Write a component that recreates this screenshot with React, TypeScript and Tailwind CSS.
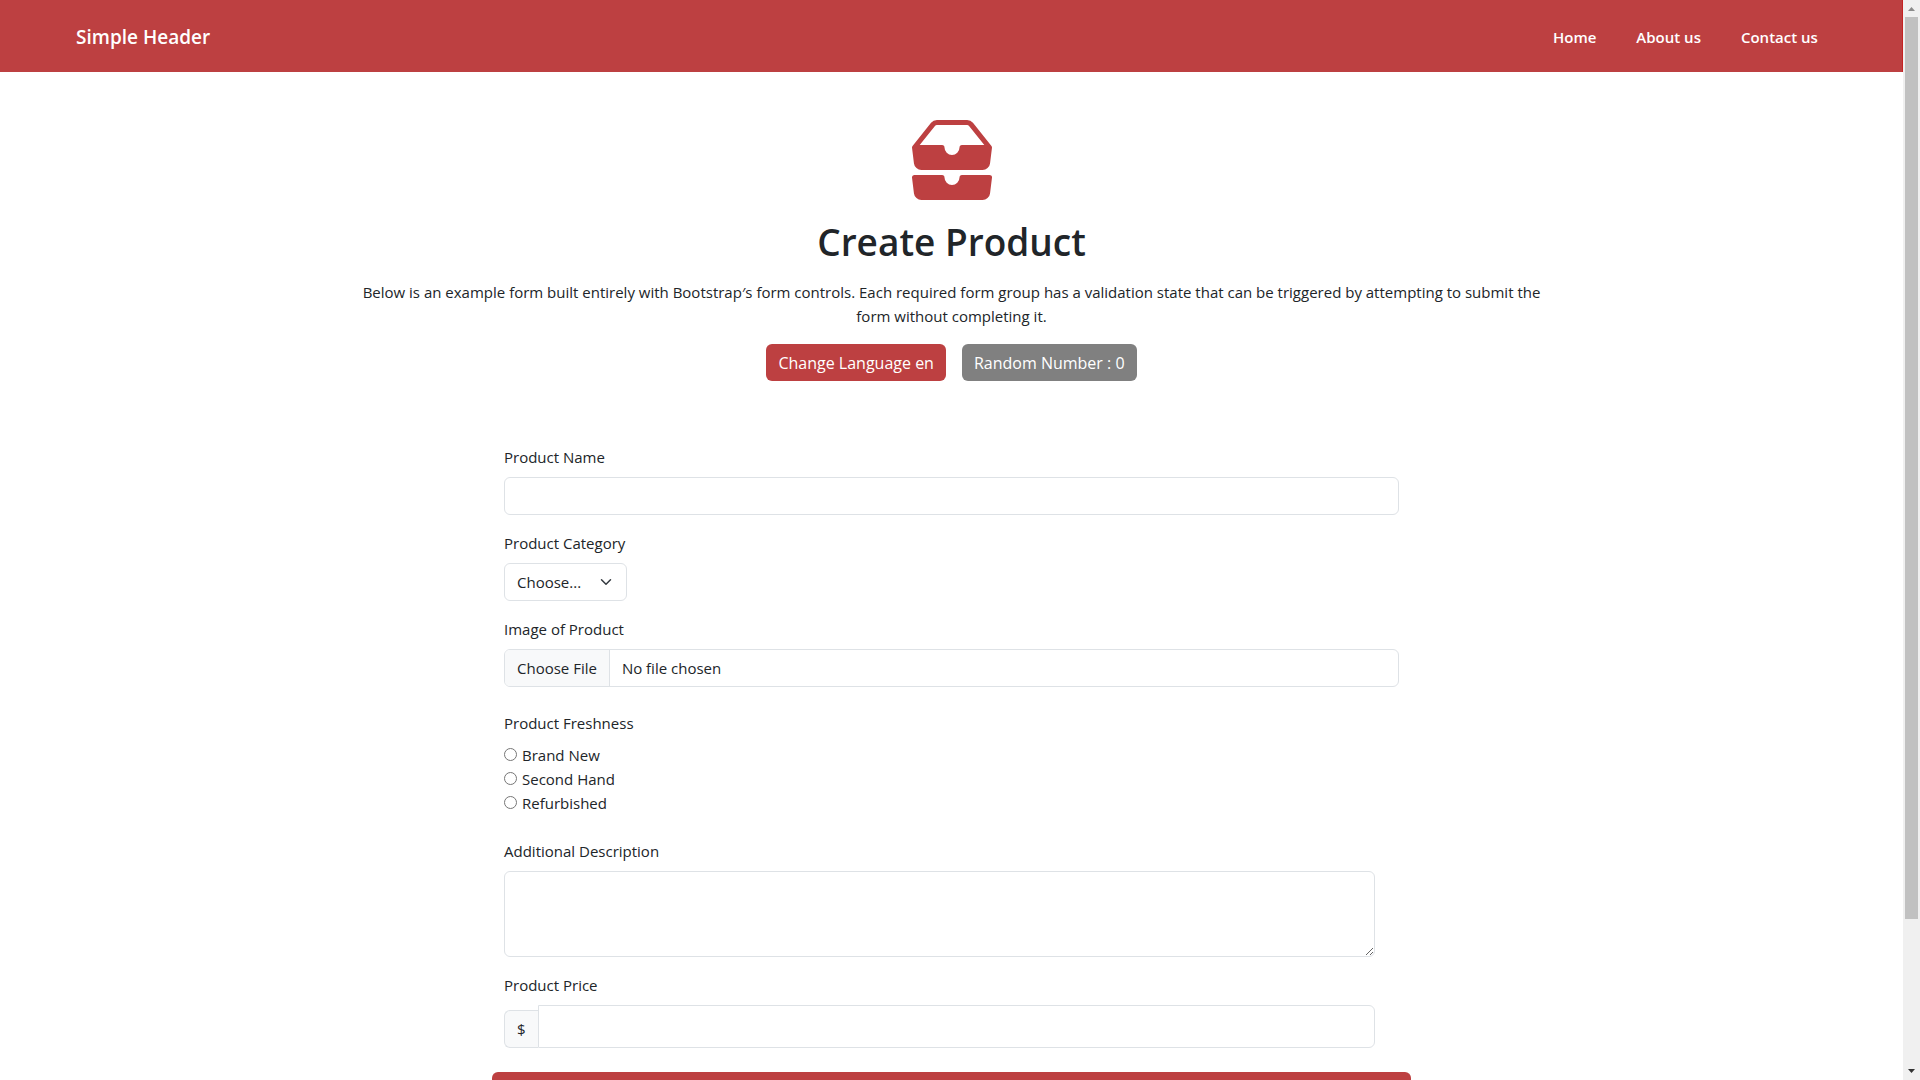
import { BsChevronDown, BsInboxesFill } from "react-icons/bs";

const links = ["Home", "About us", "Contact us"];
const freshness = ["Brand New", "Second Hand", "Refurbished"];

const labelClass = "mb-2 block";
const fieldClass =
  "rounded-md border border-[#dee2e6] bg-white text-[#212529] outline-none focus:border-[#bd4041]";

function Header() {
  return (
    <header className="flex h-18 items-center justify-between border-r border-[#c42323] bg-[#bd4041] px-[4%] pt-0.5 text-white">
      <a href="#" className="text-[19px] font-semibold">
        Simple Header
      </a>
      <nav className="flex gap-10 pr-2 text-[15px] font-semibold">
        {links.map((link) => (
          <a key={link} href="#">
            {link}
          </a>
        ))}
      </nav>
    </header>
  );
}

function Hero() {
  return (
    <section className="mx-auto flex max-w-[1200px] flex-col items-center pt-12 text-center">
      <BsInboxesFill className="size-20 text-[#bd4041]" />
      <h1 className="mt-[18px] mb-3.5 text-[37px] leading-12 font-semibold">Create Product</h1>
      <p>
        Below is an example form built entirely with Bootstrap′s form controls. Each required form
        group has a validation state that can be triggered by attempting to submit the form without
        completing it.
      </p>
      <div className="mt-4 flex gap-4 text-base text-white">
        <button type="button" className="h-[37px] rounded-md bg-[#bd4041] px-3">
          Change Language en
        </button>
        <button type="button" className="h-[37px] rounded-md bg-[#808080] px-3">
          Random Number : 0
        </button>
      </div>
    </section>
  );
}

function ProductForm() {
  return (
    <form className="mx-auto mt-16 max-w-[919px] pb-12">
      <div className="px-3">
        <label htmlFor="name" className={labelClass}>
          Product Name
        </label>
        <input id="name" type="text" className={`${fieldClass} block h-[38px] w-full px-3`} />

        <label htmlFor="category" className={`${labelClass} mt-4`}>
          Product Category
        </label>
        <div className="relative w-[123px]">
          <select
            id="category"
            className={`${fieldClass} block h-[38px] w-full appearance-none pr-9 pl-3`}
          >
            <option>Choose...</option>
            <option>Electronics</option>
            <option>Clothing</option>
          </select>
          <svg
            viewBox="0 0 16 16"
            className="pointer-events-none absolute top-[13px] right-[15px] size-3 fill-none stroke-[#343a40] stroke-2"
          >
            <path strokeLinecap="round" strokeLinejoin="round" d="m2 5 6 6 6-6" />
          </svg>
        </div>

        <label htmlFor="image" className={`${labelClass} mt-4`}>
          Image of Product
        </label>
        <input
          id="image"
          type="file"
          className={`${fieldClass} block h-[38px] w-full overflow-hidden file:mr-3 file:h-9 file:border-0 file:border-r file:border-solid file:border-[#dee2e6] file:bg-[#f8f9fa] file:px-3 file:text-[#212529]`}
        />

        <fieldset className="mt-6">
          <legend className="mb-2">Product Freshness</legend>
          {freshness.map((item) => (
            <label key={item} className="flex items-center gap-[5px]">
              <input type="radio" name="freshness" className="mb-px size-[13px]" />
              {item}
            </label>
          ))}
        </fieldset>

        <label htmlFor="description" className={`${labelClass} mt-6`}>
          Additional Description
        </label>
        <div className="pr-6">
          <textarea
            id="description"
            className={`${fieldClass} block h-[86px] w-full resize px-3 py-1.5`}
          />
        </div>

        <label htmlFor="price" className={`${labelClass} mt-4`}>
          Product Price
        </label>
        <div className="flex items-end pr-6">
          <span className="flex h-[38px] items-center rounded-l-md border border-r-0 border-[#dee2e6] bg-[#f8f9fa] px-3">
            $
          </span>
          <input
            id="price"
            type="text"
            className={`${fieldClass} h-[43px] min-w-0 flex-1 rounded-l-none px-3`}
          />
        </div>
      </div>
      <button type="submit" className="mt-6 w-full rounded-md bg-[#bd4041] py-2 text-white">
        Submit
      </button>
    </form>
  );
}

function ScrollTrack() {
  return (
    <div className="flex w-[17px] shrink-0 flex-col items-center bg-[#f0f0f0]" aria-hidden="true">
      <svg viewBox="0 0 17 17" className="size-[17px] shrink-0 fill-[#8b8b8b]">
        <path d="M8.5 7 L12 11 H5 Z" />
      </svg>
      <div className="flex w-full flex-1 flex-col px-0.5">
        <div className="h-[86.2%] bg-[#c1c1c1]" />
      </div>
      <svg viewBox="0 0 17 17" className="size-[17px] shrink-0 fill-[#333333]">
        <path d="M8.5 10 L12 6 H5 Z" />
      </svg>
    </div>
  );
}

export default function App() {
  return (
    <div className="flex h-screen bg-white font-['Open_Sans',sans-serif] text-[15px] leading-6 text-[#212529]">
      <div className="min-w-0 flex-1 overflow-y-auto [scrollbar-width:none]">
        <Header />
        <main>
          <Hero />
          <ProductForm />
        </main>
      </div>
      <ScrollTrack />
    </div>
  );
}
